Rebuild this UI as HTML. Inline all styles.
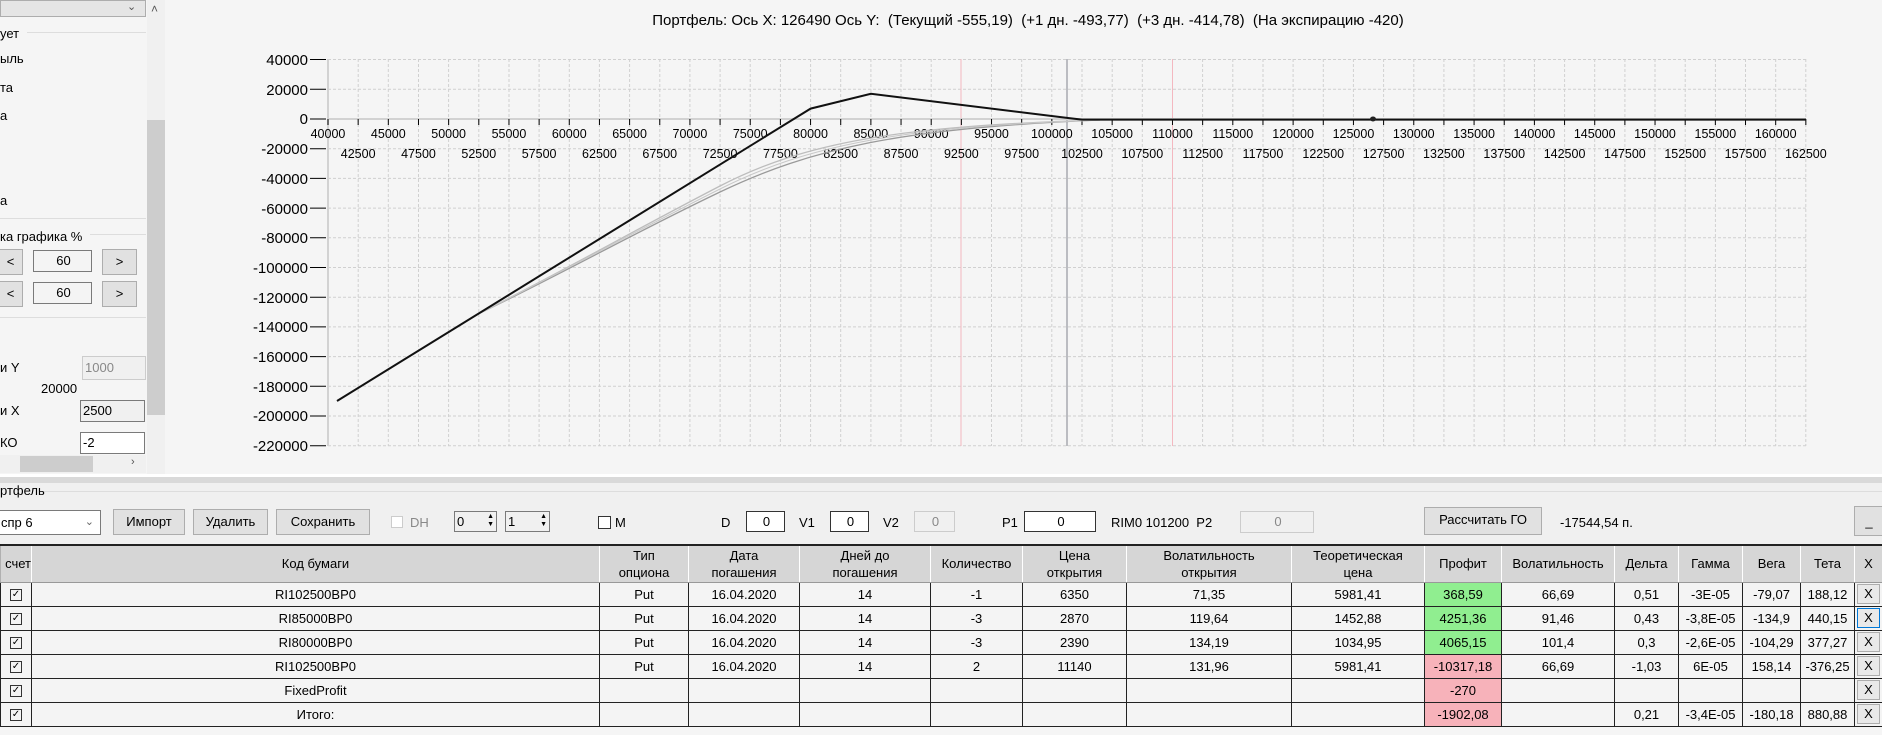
<!DOCTYPE html>
<html><head><meta charset="utf-8"><style>
*{margin:0;padding:0;box-sizing:border-box}
body{width:1882px;height:735px;background:#f5f5f5;font-family:"Liberation Sans",sans-serif;font-size:13px;color:#000;position:relative;overflow:hidden}
.a{position:absolute;white-space:nowrap}
.btn{position:absolute;background:#e1e1e1;border:1px solid #adadad;text-align:center;font-size:13px}
.box{position:absolute;background:#fff;border:1px solid #7a7a7a;font-size:13px;padding-left:2px}
table{position:absolute;left:0;top:544px;width:1882px;border-collapse:collapse;table-layout:fixed;border-top:2px solid #222}
td{border:1px solid #222;height:24px;text-align:center;font-size:13px;background:#f4f4f4;overflow:hidden;white-space:nowrap}
th{height:37px;background:#d6d6d6;font-weight:normal;font-size:13px;border-right:1px solid #fff;border-left:1px solid #b0b0b0;line-height:17px;border-bottom:1px solid #999}
.g{background:#90ee90}.p{background:#f7b2ba}
.cb{display:inline-block;width:12px;height:12px;border:1px solid #333;font-size:10px;line-height:10px;vertical-align:middle}
.x{display:block;margin:1px 2px;border:1px solid #adadad;background:#e9e9e9;height:20px;line-height:18px}
</style></head><body>
<div class="a" style="left:0;top:0;width:146px;height:17px;background:#e5e5e5;border:1px solid #adadad"></div>
<div class="a" style="left:127px;top:0;font-size:11px;color:#555">⌄</div>
<div class="a" style="left:27px;top:32px;width:119px;border-top:1px solid #ddd"></div>
<div class="a" style="left:0;top:26px">ует</div>
<div class="a" style="left:0;top:51px">ыль</div>
<div class="a" style="left:0;top:80px">та</div>
<div class="a" style="left:0;top:108px">а</div>
<div class="a" style="left:0;top:193px">а</div>
<div class="a" style="left:0;top:218px;width:146px;border-top:1px solid #ddd"></div>
<div class="a" style="left:90px;top:234px;width:56px;border-top:1px solid #ddd"></div>
<div class="a" style="left:0;top:229px">ка графика %</div>
<div class="btn" style="left:-2px;top:249px;width:25px;height:26px;line-height:24px">&lt;</div>
<div class="box" style="left:33px;top:250px;width:59px;height:22px;background:#f4f4f4;text-align:center;line-height:20px">60</div>
<div class="btn" style="left:102px;top:249px;width:35px;height:26px;line-height:24px">&gt;</div>
<div class="btn" style="left:-2px;top:281px;width:25px;height:26px;line-height:24px">&lt;</div>
<div class="box" style="left:33px;top:282px;width:59px;height:22px;background:#f4f4f4;text-align:center;line-height:20px">60</div>
<div class="btn" style="left:102px;top:281px;width:35px;height:26px;line-height:24px">&gt;</div>
<div class="a" style="left:0;top:317px;width:146px;border-top:1px solid #ddd"></div>
<div class="a" style="left:0;top:360px">и Y</div>
<div class="box" style="left:82px;top:356px;width:64px;height:24px;background:#f0f0f0;border-color:#ccc;color:#888;line-height:22px">1000</div>
<div class="a" style="left:41px;top:381px">20000</div>
<div class="a" style="left:0;top:403px">и X</div>
<div class="box" style="left:80px;top:400px;width:65px;height:22px;background:#f0f0f0;line-height:20px">2500</div>
<div class="a" style="left:0;top:435px">КО</div>
<div class="box" style="left:80px;top:432px;width:65px;height:22px;line-height:20px">-2</div>
<div class="a" style="left:151px;top:436px;font-size:11px;color:#555">⌄</div>
<div class="a" style="left:0;top:455px;width:146px;height:18px;background:#f0f0f0"></div>
<div class="a" style="left:20px;top:456px;width:73px;height:16px;background:#cdcdcd"></div>
<div class="a" style="left:131px;top:456px;font-size:11px;color:#555">›</div>
<div class="a" style="left:147px;top:0;width:18px;height:474px;background:#f0f0f0"></div>
<div class="a" style="left:147px;top:120px;width:18px;height:295px;background:#cdcdcd"></div>
<div class="a" style="left:151px;top:2px;font-size:12px;color:#555">˄</div>
<div class="a" style="left:0;top:12px;width:2056px;text-align:center;font-size:15px">Портфель: Ось X: 126490 Ось Y:&nbsp; (Текущий -555,19)&nbsp; (+1 дн. -493,77)&nbsp; (+3 дн. -414,78)&nbsp; (На экспирацию -420)</div>
<svg class="a" style="left:0;top:0" width="1882" height="480" xmlns="http://www.w3.org/2000/svg" font-family="Liberation Sans, sans-serif" font-size="14">
<g stroke="#d0d0d0" stroke-dasharray="3,2" stroke-width="1">
<path d="M328 59.5H1806M328 89.2H1806M328 148.7H1806M328 178.4H1806M328 208.1H1806M328 237.8H1806M328 267.5H1806M328 297.2H1806M328 326.9H1806M328 356.6H1806M328 386.3H1806M328 416H1806M328 445.7H1806"/>
<path d="M358.2 59V446M388.3 59V446M418.5 59V446M448.6 59V446M478.8 59V446M509 59V446M539.1 59V446M569.3 59V446M599.4 59V446M629.6 59V446M659.8 59V446M689.9 59V446M720.1 59V446M750.2 59V446M780.4 59V446M810.6 59V446M840.7 59V446M870.9 59V446M901 59V446M931.2 59V446M991.5 59V446M1021.7 59V446M1051.8 59V446M1082 59V446M1112.2 59V446M1142.3 59V446M1202.6 59V446M1232.8 59V446M1263 59V446M1293.1 59V446M1323.3 59V446M1353.4 59V446M1383.6 59V446M1413.8 59V446M1443.9 59V446M1474.1 59V446M1504.2 59V446M1534.4 59V446M1564.6 59V446M1594.7 59V446M1624.9 59V446M1655 59V446M1685.2 59V446M1715.4 59V446M1745.5 59V446M1775.7 59V446M1805.8 59V446"/>
</g>
<line x1="961" y1="59" x2="961" y2="446" stroke="#f4b8c0"/>
<line x1="1172.5" y1="59" x2="1172.5" y2="446" stroke="#f4b8c0"/>
<line x1="1067" y1="59" x2="1067" y2="446" stroke="#a8aab0" stroke-width="1.5"/>
<line x1="328" y1="59" x2="328" y2="446" stroke="#d2d2d2" stroke-width="2"/>
<line x1="328" y1="119" x2="1806" y2="119" stroke="#d2d2d2" stroke-width="2"/>
<g stroke="#000"><path d="M310 59.5H326M310 89.2H326M310 119H326M310 148.7H326M310 178.4H326M310 208.1H326M310 237.8H326M310 267.5H326M310 297.2H326M310 326.9H326M310 356.6H326M310 386.3H326M310 416H326M310 445.7H326"/></g>
<g stroke="#000" id="tk"></g>
<g text-anchor="end" font-size="15">
<text x="308" y="65">40000</text><text x="308" y="95">20000</text><text x="308" y="124">0</text><text x="308" y="154">-20000</text><text x="308" y="184">-40000</text><text x="308" y="214">-60000</text><text x="308" y="243">-80000</text><text x="308" y="273">-100000</text><text x="308" y="303">-120000</text><text x="308" y="332">-140000</text><text x="308" y="362">-160000</text><text x="308" y="392">-180000</text><text x="308" y="421">-200000</text><text x="308" y="451">-220000</text>
</g>
<g id="xl" text-anchor="middle" font-size="12.5"></g>
<path d="M480 313 C 560 275, 630 235, 720 192 S 900 128, 1100 120" fill="none" stroke="#9a9a9a" stroke-width="1.3"/>
<path d="M480 313 C 565 270, 635 230, 720 186 S 900 126, 1100 120" fill="none" stroke="#bdbdbd" stroke-width="1.3"/>
<path d="M480 313 C 562 272, 632 233, 720 189 S 900 127, 1100 120" fill="none" stroke="#c8c8c8" stroke-width="1"/>
<polyline points="337,401 810.6,108.6 870.9,93.8 1068,118 1082,119.6 1806,119.6" fill="none" stroke="#111" stroke-width="2"/>
<ellipse cx="1373" cy="119" rx="3" ry="2.5" fill="#222"/>
</svg>
<script>
(function(){var ns="http://www.w3.org/2000/svg",tk=document.getElementById("tk"),xl=document.getElementById("xl");
for(var i=0;i<=49;i++){var x=328+i*30.16;var l=document.createElementNS(ns,"line");l.setAttribute("x1",x);l.setAttribute("x2",x);l.setAttribute("y1",119);l.setAttribute("y2",125);tk.appendChild(l);
var t=document.createElementNS(ns,"text");t.setAttribute("x",x);t.setAttribute("y",i%2?158:138);t.textContent=40000+i*2500;xl.appendChild(t);}})();
</script>
<div class="a" style="left:0;top:474px;width:1882px;height:3px;background:#fff"></div>
<div class="a" style="left:0;top:477px;width:1882px;height:6px;background:#d9d9d9"></div>
<div class="a" style="left:0;top:483px;width:1882px;height:62px;background:#f0f0f0"></div>
<div class="a" style="left:40px;top:491px;width:1842px;border-top:1px solid #ddd"></div>
<div class="a" style="left:0;top:483px">ртфель</div>
<div class="box" style="left:-2px;top:510px;width:103px;height:25px;line-height:23px">спр 6<span style="position:absolute;right:6px;color:#666;font-size:11px">⌄</span></div>
<div class="btn" style="left:113px;top:509px;width:72px;height:26px;line-height:24px">Импорт</div>
<div class="btn" style="left:193px;top:509px;width:75px;height:26px;line-height:24px">Удалить</div>
<div class="btn" style="left:276px;top:509px;width:94px;height:26px;line-height:24px">Сохранить</div>
<div class="a" style="left:391px;top:516px;width:12px;height:12px;border:1px solid #ccc;background:#fff"></div>
<div class="a" style="left:410px;top:515px;color:#888">DH</div>
<div class="box" style="left:454px;top:511px;width:43px;height:21px;line-height:19px;background:#f0f0f0">0<span style="position:absolute;right:2px;top:1px;font-size:7px;line-height:8px">▲<br>▼</span></div>
<div class="box" style="left:505px;top:511px;width:45px;height:21px;line-height:19px;background:#f0f0f0">1<span style="position:absolute;right:2px;top:1px;font-size:7px;line-height:8px">▲<br>▼</span></div>
<div class="a" style="left:598px;top:516px;width:13px;height:13px;border:1px solid #333;background:#fff"></div>
<div class="a" style="left:615px;top:515px">M</div>
<div class="a" style="left:721px;top:515px">D</div>
<div class="box" style="left:746px;top:511px;width:39px;height:21px;text-align:center;line-height:19px;border-color:#333">0</div>
<div class="a" style="left:799px;top:515px">V1</div>
<div class="box" style="left:830px;top:511px;width:39px;height:21px;text-align:center;line-height:19px;border-color:#333">0</div>
<div class="a" style="left:883px;top:515px">V2</div>
<div class="box" style="left:914px;top:511px;width:41px;height:21px;text-align:center;line-height:19px;border-color:#ccc;background:#f0f0f0;color:#888">0</div>
<div class="a" style="left:1002px;top:515px">P1</div>
<div class="box" style="left:1024px;top:511px;width:72px;height:21px;text-align:center;line-height:19px;border-color:#333">0</div>
<div class="a" style="left:1111px;top:515px">RIM0 101200&nbsp; P2</div>
<div class="box" style="left:1240px;top:511px;width:74px;height:22px;text-align:center;line-height:20px;border-color:#ccc;background:#f0f0f0;color:#888">0</div>
<div class="btn" style="left:1424px;top:507px;width:118px;height:28px;line-height:24px">Рассчитать ГО</div>
<div class="a" style="left:1560px;top:515px">-17544,54 п.</div>
<div class="btn" style="left:1854px;top:506px;width:30px;height:30px;line-height:30px">_</div>
<table>
<colgroup><col style="width:31px"><col style="width:568px"><col style="width:89px"><col style="width:111px"><col style="width:131px"><col style="width:92px"><col style="width:104px"><col style="width:165px"><col style="width:133px"><col style="width:77px"><col style="width:113px"><col style="width:64px"><col style="width:64px"><col style="width:58px"><col style="width:54px"><col style="width:28px"></colgroup>
<tr><th style="text-align:right">счет</th><th>Код бумаги</th><th>Тип<br>опциона</th><th>Дата<br>погашения</th><th>Дней до<br>погашения</th><th>Количество</th><th>Цена<br>открытия</th><th>Волатильность<br>открытия</th><th>Теоретическая<br>цена</th><th>Профит</th><th>Волатильность</th><th>Дельта</th><th>Гамма</th><th>Вега</th><th>Тета</th><th>X</th></tr>
<tr><td><span class="cb">✓</span></td><td>RI102500BP0</td><td>Put</td><td>16.04.2020</td><td>14</td><td>-1</td><td>6350</td><td>71,35</td><td>5981,41</td><td class="g">368,59</td><td>66,69</td><td>0,51</td><td>-3E-05</td><td>-79,07</td><td>188,12</td><td><span class="x">X</span></td></tr>
<tr><td><span class="cb">✓</span></td><td>RI85000BP0</td><td>Put</td><td>16.04.2020</td><td>14</td><td>-3</td><td>2870</td><td>119,64</td><td>1452,88</td><td class="g">4251,36</td><td>91,46</td><td>0,43</td><td>-3,8E-05</td><td>-134,9</td><td>440,15</td><td><span class="x" style="border-color:#0078d7">X</span></td></tr>
<tr><td><span class="cb">✓</span></td><td>RI80000BP0</td><td>Put</td><td>16.04.2020</td><td>14</td><td>-3</td><td>2390</td><td>134,19</td><td>1034,95</td><td class="g">4065,15</td><td>101,4</td><td>0,3</td><td>-2,6E-05</td><td>-104,29</td><td>377,27</td><td><span class="x">X</span></td></tr>
<tr><td><span class="cb">✓</span></td><td>RI102500BP0</td><td>Put</td><td>16.04.2020</td><td>14</td><td>2</td><td>11140</td><td>131,96</td><td>5981,41</td><td class="p">-10317,18</td><td>66,69</td><td>-1,03</td><td>6E-05</td><td>158,14</td><td>-376,25</td><td><span class="x">X</span></td></tr>
<tr><td><span class="cb">✓</span></td><td>FixedProfit</td><td></td><td></td><td></td><td></td><td></td><td></td><td></td><td class="p">-270</td><td></td><td></td><td></td><td></td><td></td><td><span class="x">X</span></td></tr>
<tr><td><span class="cb">✓</span></td><td>Итого:</td><td></td><td></td><td></td><td></td><td></td><td></td><td></td><td class="p">-1902,08</td><td></td><td>0,21</td><td>-3,4E-05</td><td>-180,18</td><td>880,88</td><td><span class="x">X</span></td></tr>
</table>
</body></html>
